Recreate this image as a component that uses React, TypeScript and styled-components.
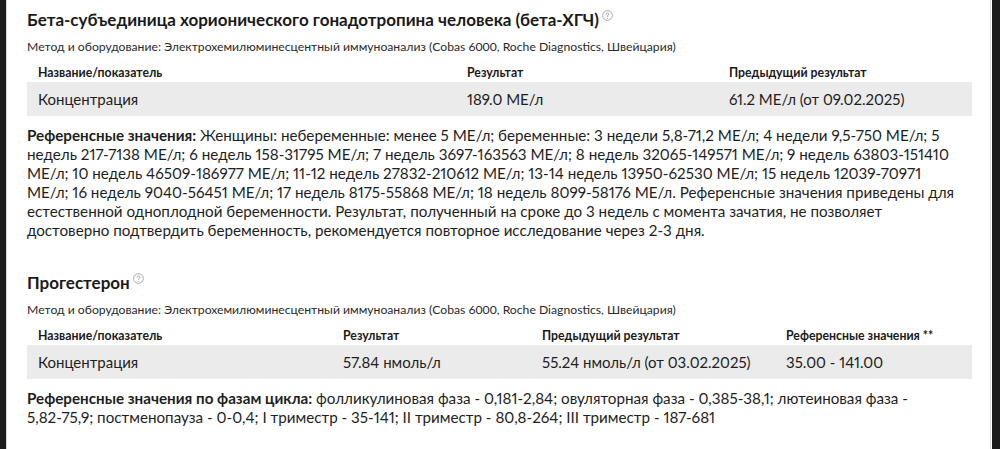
import React from "react";
import styled, { createGlobalStyle } from "styled-components";

const Global = createGlobalStyle`
  html, body { margin: 0; padding: 0; background: #ffffff; }
  body { font-family: Lato, "Open Sans", sans-serif; color: #1e1e1e; }
  * { box-sizing: border-box; }
`;

const Frame = styled.div`
  display: flex;
  width: 1000px;
  height: 449px;
  overflow: hidden;
  background: #ffffff;
`;

const DarkEdge = styled.div<{ $w: number }>`
  flex: 0 0 ${(p) => p.$w}px;
  background: #1b1b1b;
`;

const Page = styled.main`
  flex: 1;
  border-left: 1px solid #d6d6d6;
  border-right: 1px solid #dcdcdc;
  margin-right: 1px;
  padding: 9px 18px 0 20px;
`;

const Section = styled.section<{ $gap?: number }>`
  margin-top: ${(p) => p.$gap ?? 0}px;
`;

const Title = styled.h2`
  margin: 0;
  font-size: 17px;
  line-height: 22px;
  font-weight: 700;
  color: #1a1a1a;
  display: flex;
  align-items: flex-start;
`;

const Help = styled.span`
  display: inline-flex;
  margin-left: 3px;
  margin-top: 1px;
  color: #9a9a9a;
`;

const Method = styled.div`
  margin-top: 8px;
  font-size: 12.2px;
  line-height: 16px;
  color: #2a2a2a;
`;

const Table = styled.div<{ $cols: string }>`
  margin-top: 10px;
  display: grid;
  grid-template-columns: ${(p) => p.$cols};
`;

const HeadCell = styled.div`
  padding: 0 0 1px 11px;
  font-size: 12.3px;
  line-height: 16px;
  font-weight: 700;
  color: #1a1a1a;
`;

const Cell = styled.div`
  background: #ebebeb;
  padding-left: 11px;
  height: 34px;
  display: flex;
  align-items: center;
  font-size: 15px;
  color: #1e1e1e;
  font-variant-numeric: proportional-nums;
`;

const Ref = styled.div`
  margin-top: 10px;
  font-size: 15.2px;
  line-height: 19px;
  color: #1e1e1e;
  font-variant-numeric: proportional-nums;
  b { font-weight: 700; }
`;

const RefLine = styled.div`
  white-space: nowrap;
`;

const HelpIcon = () => (
  <Help>
    <svg width="11" height="11" viewBox="0 0 12 12" fill="none">
      <circle cx="6" cy="6" r="5.3" stroke="currentColor" strokeWidth="0.9" />
      <path
        d="M4.4 4.7c0-1 .7-1.6 1.6-1.6s1.6.6 1.6 1.4c0 .7-.4 1-.9 1.3-.5.3-.7.5-.7 1.1v.3"
        stroke="currentColor"
        strokeWidth="0.9"
        strokeLinecap="round"
      />
      <circle cx="6" cy="8.9" r="0.55" fill="currentColor" />
    </svg>
  </Help>
);

type Block = {
  title: string;
  cols: string;
  heads: string[];
  cells: string[];
  refLabel: string;
  refLines: string[];
  gap?: number;
};

const method =
  "Метод и оборудование: Электрохемилюминесцентный иммуноанализ (Cobas 6000, Roche Diagnostics, Швейцария)";

const blocks: Block[] = [
  {
    title: "Бета-субъединица хорионического гонадотропина человека (бета-ХГЧ)",
    cols: "429px 262px 1fr",
    heads: ["Название/показатель", "Результат", "Предыдущий результат"],
    cells: ["Концентрация", "189.0 МЕ/л", "61.2 МЕ/л (от 09.02.2025)"],
    refLabel: "Референсные значения:",
    refLines: [
      " Женщины: небеременные: менее 5 МЕ/л; беременные: 3 недели 5,8-71,2 МЕ/л; 4 недели 9,5-750 МЕ/л; 5",
      "недель 217-7138 МЕ/л; 6 недель 158-31795 МЕ/л; 7 недель 3697-163563 МЕ/л; 8 недель 32065-149571 МЕ/л; 9 недель 63803-151410",
      "МЕ/л; 10 недель 46509-186977 МЕ/л; 11-12 недель 27832-210612 МЕ/л; 13-14 недель 13950-62530 МЕ/л; 15 недель 12039-70971",
      "МЕ/л; 16 недель 9040-56451 МЕ/л; 17 недель 8175-55868 МЕ/л; 18 недель 8099-58176 МЕ/л. Референсные значения приведены для",
      "естественной одноплодной беременности. Результат, полученный на сроке до 3 недель с момента зачатия, не позволяет",
      "достоверно подтвердить беременность, рекомендуется повторное исследование через 2-3 дня.",
    ],
  },
  {
    title: "Прогестерон",
    cols: "305px 199px 244px 1fr",
    heads: ["Название/показатель", "Результат", "Предыдущий результат", "Референсные значения **"],
    cells: ["Концентрация", "57.84 нмоль/л", "55.24 нмоль/л (от 03.02.2025)", "35.00 - 141.00"],
    refLabel: "Референсные значения по фазам цикла:",
    refLines: [
      " фолликулиновая фаза - 0,181-2,84; овуляторная фаза - 0,385-38,1; лютеиновая фаза -",
      "5,82-75,9; постменопауза - 0-0,4; I триместр - 35-141; II триместр - 80,8-264; III триместр - 187-681",
    ],
    gap: 32,
  },
];

export default function App() {
  return (
    <>
      <Global />
      <Frame>
        <DarkEdge $w={6} />
        <Page>
          {blocks.map((b) => (
            <Section key={b.title} $gap={b.gap}>
              <Title>
                {b.title}
                <HelpIcon />
              </Title>
              <Method>{method}</Method>
              <Table $cols={b.cols}>
                {b.heads.map((h) => (
                  <HeadCell key={h}>{h}</HeadCell>
                ))}
                {b.cells.map((c, i) => (
                  <Cell key={i}>{c}</Cell>
                ))}
              </Table>
              <Ref>
                {b.refLines.map((line, i) => (
                  <RefLine key={i}>
                    {i === 0 && <b>{b.refLabel}</b>}
                    {line}
                  </RefLine>
                ))}
              </Ref>
            </Section>
          ))}
        </Page>
        <DarkEdge $w={8} />
      </Frame>
    </>
  );
}
